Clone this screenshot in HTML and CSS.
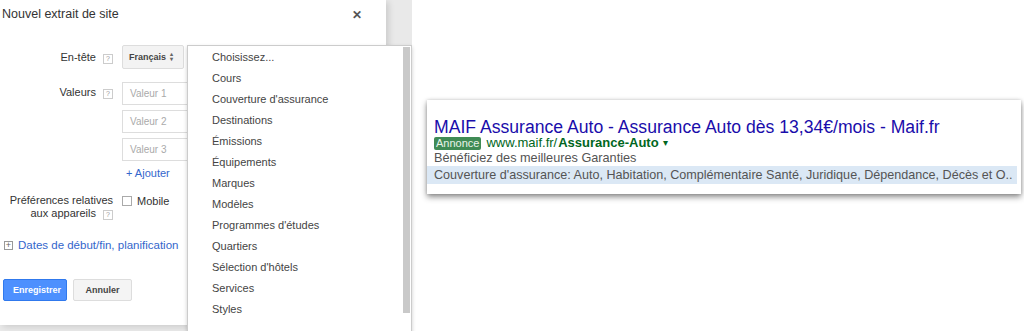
FILE: index.html
```html
<!DOCTYPE html>
<html>
<head>
  <meta charset="UTF-8">
  <title>Nouvel extrait de site</title>
  <link rel="stylesheet" href="styles.css">
</head>
<body>
  <div class="page">
    <div class="left">
      <div class="dialog">
        <div class="dialog-head">
          <span class="title">Nouvel extrait de site</span>
          <span class="close">&#x2715;</span>
        </div>
        <div class="row row-head">
          <div class="label">En-tête <span class="help">?</span></div>
          <div class="field">
            <div class="select">Français <span class="arrows">&#x25B4;<br>&#x25BE;</span></div>
          </div>
        </div>
        <div class="row row-values">
          <div class="label">Valeurs <span class="help">?</span></div>
          <div class="field values">
            <div class="input">Valeur 1</div>
            <div class="input">Valeur 2</div>
            <div class="input">Valeur 3</div>
            <a class="add">+ Ajouter</a>
          </div>
        </div>
        <div class="row row-device">
          <div class="label">Préférences relatives<br>aux appareils <span class="help">?</span></div>
          <div class="field check"><span class="box"></span>Mobile</div>
        </div>
        <div class="dates"><span class="plus">+</span>Dates de début/fin, planification</div>
        <div class="buttons">
          <span class="btn btn-save">Enregistrer</span>
          <span class="btn btn-cancel">Annuler</span>
        </div>
      </div>

      <div class="menu">
        <ul>
          <li>Choisissez...</li>
          <li>Cours</li>
          <li>Couverture d'assurance</li>
          <li>Destinations</li>
          <li>Émissions</li>
          <li>Équipements</li>
          <li>Marques</li>
          <li>Modèles</li>
          <li>Programmes d'études</li>
          <li>Quartiers</li>
          <li>Sélection d'hôtels</li>
          <li>Services</li>
          <li>Styles</li>
        </ul>
        <div class="scrollbar"></div>
      </div>
    </div>

    <div class="right">
      <div class="ad">
        <div class="ad-title">MAIF Assurance Auto - Assurance Auto dès 13,34€/mois - Maif.fr</div>
        <div class="ad-url"><span class="badge">Annonce</span>www.maif.fr/<b>Assurance-Auto</b> <span class="caret">&#x25BE;</span></div>
        <div class="ad-desc">Bénéficiez des meilleures Garanties</div>
        <div class="ad-snippet">Couverture d'assurance: Auto, Habitation, Complémentaire Santé, Juridique, Dépendance, Décès et O..</div>
      </div>
    </div>
  </div>
</body>
</html>
```

FILE: styles.css
```css
* {
  box-sizing: border-box;
}
body {
  margin: 0;
  background-color: #fff;
  font-family: "Liberation Sans", Arial, sans-serif;
  color: #444;
}
.page {
  display: flex;
  width: 1024px;
  height: 331px;
  overflow: hidden;
}
.left {
  position: relative;
  width: 412px;
  height: 331px;
  background-color: #e9e9e9;
  flex-shrink: 0;
}
.dialog {
  width: 386px;
  height: 325px;
  background-color: #fff;
  box-shadow: 3px 2px 6px rgba(0, 0, 0, 0.12);
}
.dialog-head {
  display: flex;
  justify-content: space-between;
  padding: 7px 24px 0 2px;
  height: 45px;
}
.title {
  font-size: 12.5px;
  color: #333;
}
.close {
  font-size: 12px;
  font-weight: bold;
  color: #555;
  padding-top: 1px;
}
.row {
  display: flex;
}
.label {
  width: 113px;
  text-align: right;
  font-size: 11px;
  color: #333;
  line-height: 13px;
}
.help {
  display: inline-block;
  width: 10px;
  height: 10px;
  margin-left: 4px;
  border: 1px solid #ccc;
  font-size: 7px;
  line-height: 8px;
  text-align: center;
  color: #999;
  vertical-align: 0;
}
.field {
  margin-left: 9px;
}
.row-head .label {
  padding-top: 6px;
}
.select {
  display: flex;
  align-items: center;
  width: 62px;
  height: 24px;
  padding-left: 6px;
  background-color: #f3f3f3;
  border: 1px solid #ddd;
  border-radius: 2px;
  font-size: 9px;
  font-weight: bold;
  color: #444;
}
.arrows {
  margin-left: 4px;
  font-size: 6px;
  line-height: 5px;
  color: #666;
}
.row-values {
  margin-top: 13px;
}
.row-values .label {
  padding-top: 4px;
}
.values {
  display: flex;
  flex-direction: column;
  gap: 5px;
}
.input {
  width: 80px;
  height: 23px;
  padding: 5px 0 0 7px;
  border: 1px solid #ddd;
  font-size: 10px;
  color: #aaa;
}
.add {
  margin-top: 1px;
  padding-left: 4px;
  font-size: 11px;
  color: #3366cc;
}
.row-device {
  margin-top: 15px;
}
.check {
  display: flex;
  font-size: 11px;
  color: #333;
  margin-top: 1px;
}
.box {
  width: 10px;
  height: 10px;
  margin-right: 5px;
  margin-top: 1px;
  border: 1px solid #aaa;
  background-color: #fff;
}
.dates {
  display: flex;
  align-items: center;
  margin-top: 19px;
  padding-left: 4px;
  font-size: 11.5px;
  color: #3366cc;
}
.plus {
  display: inline-block;
  width: 9px;
  height: 9px;
  margin-right: 5px;
  border: 1px solid #999;
  font-size: 9px;
  line-height: 7px;
  text-align: center;
  color: #666;
}
.buttons {
  display: flex;
  gap: 6px;
  margin-top: 28px;
  padding-left: 3px;
}
.btn {
  display: inline-block;
  height: 22px;
  line-height: 20px;
  padding: 0 9px;
  font-size: 9px;
  font-weight: bold;
  border-radius: 2px;
}
.btn-save {
  width: 64px;
  text-align: center;
  background-color: #4d90fe;
  border: 1px solid #3079ed;
  color: #fff;
}
.btn-cancel {
  width: 59px;
  text-align: center;
  background-color: #f4f4f4;
  border: 1px solid #ddd;
  color: #444;
}
.menu {
  position: absolute;
  left: 187px;
  top: 45px;
  width: 225px;
  height: 290px;
  background-color: #fff;
  border: 1px solid #ccc;
  box-shadow: 0 2px 4px rgba(0, 0, 0, 0.2);
}
.menu ul {
  list-style: none;
  margin: 0;
  padding: 4px 0 0 24px;
}
.menu li {
  height: 21px;
  line-height: 15px;
  font-size: 11px;
  color: #444;
}
.scrollbar {
  position: absolute;
  right: 1px;
  top: 1px;
  width: 7px;
  height: 266px;
  background-color: #c9c9c9;
}
.right {
  flex: 1;
  padding-top: 100px;
  padding-left: 15px;
}
.ad {
  width: 594px;
  height: 94px;
  padding: 18px 0 0 7px;
  background-color: #fff;
  box-shadow: 0 3px 6px rgba(0, 0, 0, 0.45), 0 0 3px rgba(0, 0, 0, 0.15);
}
.ad-title {
  font-size: 17.6px;
  color: #1a0dab;
  line-height: 18px;
  white-space: nowrap;
}
.ad-url {
  display: flex;
  align-items: center;
  height: 14px;
  font-size: 13px;
  color: #006621;
  line-height: 14px;
}
.badge {
  margin-right: 5px;
  padding: 0 2px;
  background-color: #3f8b55;
  color: #e8f3ea;
  font-size: 11px;
  line-height: 13px;
  border-radius: 2px;
}
.ad-url b {
  margin-left: 1px;
}
.caret {
  margin-left: 4px;
  font-size: 10px;
}
.ad-desc {
  font-size: 12.7px;
  color: #545454;
  line-height: 16px;
}
.ad-snippet {
  width: 590px;
  margin-left: -7px;
  padding-left: 7px;
  font-size: 12.6px;
  color: #545454;
  line-height: 18px;
  white-space: nowrap;
  background-color: #dbe8f5;
}
```
